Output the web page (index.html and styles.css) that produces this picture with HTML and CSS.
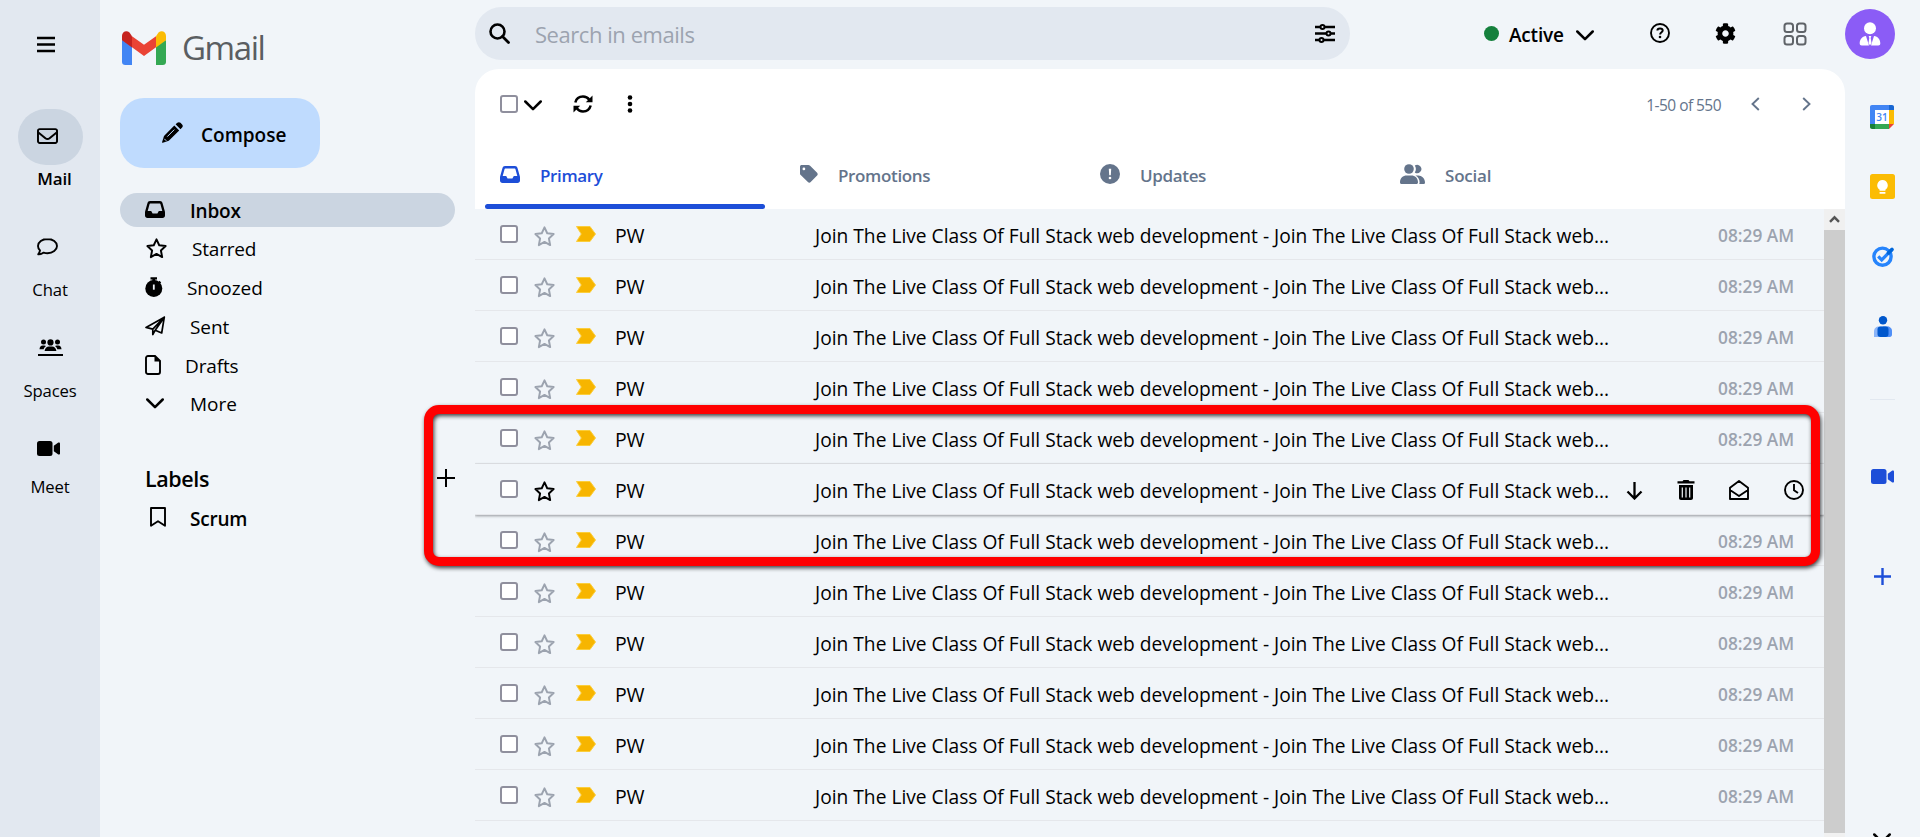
FILE: index.html
```html
<!DOCTYPE html>
<html lang="en">
<head>
<meta charset="utf-8">
<title>Gmail</title>
<link rel="stylesheet" href="styles.css">
</head>
<body>
<svg class="defs" aria-hidden="true">
  <symbol id="envelope" viewBox="0 64 512 384"><path d="M64 112c-8.800 0-16 7.200-16 16v22.100L220.500 291.700c20.700 17 50.400 17 71.100 0L464 150.100V128c0-8.800-7.200-16-16-16H64zM48 212.200V384c0 8.800 7.200 16 16 16H448c8.800 0 16-7.200 16-16V212.200L322 328.800c-38.400 31.500-93.700 31.500-132 0L48 212.200zM0 128C0 92.700 28.700 64 64 64H448c35.300 0 64 28.700 64 64V384c0 35.300-28.700 64-64 64H64c-35.300 0-64-28.700-64-64V128z"/></symbol>
  <symbol id="star" viewBox="0 0 20 20"><path d="M10 1.300l2.600 5.600 6.100.8-4.500 4.200 1.200 6.300L10 15.200l-5.400 3 1.200-6.300L1.300 7.700l6.100-.8z" fill="none" stroke="currentColor" stroke-width="1.850" stroke-linejoin="round"/></symbol>
  <symbol id="chevron" viewBox="0 0 18 11"><path d="M1.300 1.500L9 9.200l7.700-7.700" fill="none" stroke="currentColor" stroke-width="2.500" stroke-linecap="round" stroke-linejoin="round"/></symbol>
  <symbol id="inbox" viewBox="0 0 20 17"><path fill-rule="evenodd" d="M5 0h10c1.300 0 2.200.8 2.500 2l2.400 8.500c.1.400.1.800.1 1.200V14.500c0 1.500-1 2.500-2.500 2.500h-15C1 17 0 16 0 14.500V11.700c0-.4 0-.8.1-1.200L2.500 2C2.800.8 3.700 0 5 0zm.2 2.400c-.3 0-.5.200-.6.500L2.700 10h3.500l1.400 2.500h4.800l1.400-2.500h3.500l-1.900-7.100c-.1-.3-.3-.5-.6-.5z"/></symbol>
  <symbol id="video" viewBox="0 0 23 15"><rect width="15.500" height="15" rx="2.500"/><path d="M16.800 4.800l4.500-3.200c.8-.5 1.700 0 1.700.9v10c0 .9-.9 1.400-1.700.9l-4.500-3.200z"/></symbol>
  <symbol id="plus" viewBox="0 0 18 18"><path d="M9 0v18M0 9h18" stroke="currentColor" stroke-width="2"/></symbol>
  <symbol id="important" viewBox="0 0 20 16"><path d="M.5.500h13.500L19.500 8 14 15.500H.5L5.300 8z" fill="#f7b500" stroke="#fbce3c"/></symbol>
</svg>

<div class="app">
  <nav class="rail">
    <svg class="menu" viewBox="0 0 18 15"><path d="M0 1h18M0 7.500h18M0 14h18" stroke="currentColor" stroke-width="2.500"/></svg>
    <div class="mail-pill"><svg width="21" height="16"><use href="#envelope"/></svg></div>
    <div class="rail-label mail">Mail</div>
    <svg class="r-chat" viewBox="0 0 21 18"><path d="M10.500 1C5.200 1 1 4 1 8c0 1.700.8 3.200 2 4.400-.2 1.600-1 2.900-1.800 3.900 2.200.1 4.200-.7 5.500-1.700 1.200.4 2.500.6 3.800.6 5.300 0 9.500-3.200 9.500-7.200S15.800 1 10.500 1z" fill="none" stroke="currentColor" stroke-width="1.900" stroke-linejoin="round"/></svg>
    <div class="rail-label chat">Chat</div>
    <svg class="r-spaces" viewBox="0 0 25 18"><circle cx="5.500" cy="2.900" r="2.500"/><circle cx="19.500" cy="2.900" r="2.500"/><circle cx="12.500" cy="3.400" r="3.100"/><path d="M6.600 12c.2-2.700 2.100-4.500 4.400-4.500h3c2.300 0 4.200 1.800 4.400 4.500zM1.500 10.200C1.500 8 2.900 6.400 4.700 6.400h1.500c.7 0 1.300.2 1.800.6-1.200.8-2 1.900-2.300 3.200zM23.500 10.200c0-2.200-1.400-3.800-3.200-3.800h-1.500c-.7 0-1.300.2-1.800.6 1.200.8 2 1.900 2.300 3.200z"/><path d="M0 16h25" stroke="currentColor" stroke-width="2"/></svg>
    <div class="rail-label spaces">Spaces</div>
    <svg class="r-meet"><use href="#video"/></svg>
    <div class="rail-label meet">Meet</div>
  </nav>

  <aside class="sidebar">
    <div class="logo">
      <svg width="44" height="34" viewBox="0 0 44 34"><path d="M0 9v22c0 1.800 1.300 3 3.200 3H10V14z" fill="#4285f4"/><path d="M44 9v22c0 1.800-1.300 3-3.200 3H34V14z" fill="#34a853"/><path d="M10 5.200L22 13.700l12-8.500v11L22 25 10 16.200z" fill="#ea4335"/><path d="M0 4.800v4.400l10 7.300V5.200L7.500 1.400C4.500-1.200 0 .5 0 4.800z" fill="#c5221f"/><path d="M44 4.800v4.400l-10 7.300V5.200l2.500-3.800C39.500-1.200 44 .5 44 4.800z" fill="#fbbc04"/></svg>
      <span class="wordmark">Gmail</span>
    </div>
    <button class="compose">
      <svg width="21" height="21" viewBox="0 0 21 21"><path d="M12.300 3.600l4.900 4.900L6.800 18.800.8 20.800c-.5.100-.8-.2-.7-.7L2 13.900zM13.600 2.300L15.300.8c.9-.9 2.300-.9 3.200 0l1.600 1.700c.9.900.9 2.200 0 3.100l-1.600 1.700z"/><path d="M5.300 14.600l7-7M2.300 16.800l2 2" stroke="#bfdbfe" stroke-width="1"/></svg>
      <span>Compose</span>
    </button>
    <ul class="folders">
      <li class="active"><svg width="20" height="17"><use href="#inbox"/></svg><span>Inbox</span></li>
      <li class="starred"><svg width="21" height="21"><use href="#star"/></svg><span>Starred</span></li>
      <li class="snoozed"><svg width="18" height="20" viewBox="0 0 18 20"><circle cx="8.800" cy="11.500" r="8.500"/><path d="M5.500.2h6.500v2.200h-1.800v2H7.400v-2H5.500zM14.500 3.800l1.700 1.700-2 2-1.700-1.700z"/><path d="M8.800 7.500v5.200" stroke="#f1f5f9" stroke-width="1.800"/></svg><span>Snoozed</span></li>
      <li class="sent"><svg width="21" height="20" viewBox="0 0 21 20"><path d="M1 11.400L19.300 1.200 16.700 17l-6.500-2.800-2.400 4.300v-5.400zM7.800 13.100L19.300 1.200l-9.100 13" fill="none" stroke="currentColor" stroke-width="1.700" stroke-linejoin="round"/></svg><span>Sent</span></li>
      <li class="drafts"><svg width="16" height="20" viewBox="0 0 16 20"><path d="M3 1h7l5 5v11a2 2 0 0 1-2 2H3a2 2 0 0 1-2-2V3a2 2 0 0 1 2-2z" fill="none" stroke="currentColor" stroke-width="1.900"/><path d="M9.500 1v5.500H15z"/></svg><span>Drafts</span></li>
      <li class="more"><svg width="18" height="11"><use href="#chevron"/></svg><span>More</span></li>
    </ul>
    <div class="labels"><h2>Labels</h2><svg width="18" height="18"><use href="#plus"/></svg></div>
    <div class="label"><svg width="16" height="20" viewBox="0 0 16 20"><path d="M1 1h14v17.800l-7-4.600-7 4.600z" fill="none" stroke="currentColor" stroke-width="1.900" stroke-linejoin="round"/></svg><span>Scrum</span></div>
  </aside>

  <main class="main">
    <header class="topbar">
      <div class="search">
        <svg width="21" height="21" viewBox="0 0 21 21"><circle cx="8.500" cy="8.500" r="7" fill="none" stroke="currentColor" stroke-width="2.600"/><path d="M13.500 13.500l6 6" stroke="currentColor" stroke-width="2.800" stroke-linecap="round"/></svg>
        <span class="placeholder">Search in emails</span>
        <svg class="sliders" width="20" height="19" viewBox="0 0 20 19"><path d="M0 3h20M0 9.500h20M0 16h20" stroke="currentColor" stroke-width="2.500"/><g fill="#e2e8f0" stroke="currentColor" stroke-width="2"><circle cx="7.500" cy="3" r="2"/><circle cx="13.500" cy="9.500" r="2"/><circle cx="6.500" cy="16" r="2"/></g></svg>
      </div>
      <div class="status"><i class="dot"></i><span>Active</span><svg width="18" height="11"><use href="#chevron"/></svg></div>
      <svg class="help" width="20" height="20" viewBox="0 0 20 20"><circle cx="10" cy="10" r="9" fill="none" stroke="currentColor" stroke-width="1.900"/><path d="M7.400 7.600c0-1.300 1-2.100 2.600-2.100s2.700.8 2.700 2.100c0 1.700-2.600 1.800-2.600 3.900" fill="none" stroke="currentColor" stroke-width="2"/><circle cx="10" cy="14" r="1.300"/></svg>
      <svg class="gear" width="21" height="21" viewBox="0 0 512 512"><path d="M487.400 315.700l-42.600-24.600c4.300-23.200 4.300-47 0-70.200l42.600-24.600c4.900-2.800 7.100-8.600 5.500-14-11.100-35.600-30-67.800-54.700-94.600-3.800-4.100-10-5.100-14.800-2.300L380.800 110c-17.900-15.400-38.500-27.300-60.800-35.100V25.800c0-5.600-3.900-10.500-9.400-11.700-36.700-8.200-74.300-7.800-109.200 0-5.500 1.200-9.400 6.100-9.400 11.700V75c-22.200 7.900-42.800 19.800-60.800 35.100L88.700 85.500c-4.900-2.800-11-1.900-14.800 2.300-24.700 26.700-43.600 58.900-54.700 94.600-1.700 5.400.6 11.200 5.500 14L67.300 221c-4.300 23.200-4.300 47 0 70.200l-42.600 24.600c-4.900 2.800-7.100 8.600-5.500 14 11.100 35.600 30 67.800 54.700 94.600 3.800 4.100 10 5.100 14.800 2.300l42.600-24.600c17.900 15.400 38.500 27.300 60.800 35.100v49.200c0 5.600 3.900 10.500 9.400 11.700 36.700 8.200 74.300 7.800 109.200 0 5.500-1.200 9.400-6.100 9.400-11.700v-49.200c22.200-7.900 42.800-19.800 60.800-35.100l42.600 24.600c4.900 2.800 11 1.900 14.800-2.300 24.700-26.700 43.600-58.900 54.700-94.600 1.500-5.500-.7-11.300-5.600-14.100zM256 336c-44.100 0-80-35.900-80-80s35.900-80 80-80 80 35.900 80 80-35.900 80-80 80z"/></svg>
      <svg class="grid" width="24" height="24" viewBox="0 0 24 24"><g fill="none" stroke="#5f6368" stroke-width="2"><rect x="1.500" y="1.500" width="8.500" height="8.500" rx="2.500"/><rect x="14" y="1.500" width="8.500" height="8.500" rx="2.500"/><rect x="1.500" y="14" width="8.500" height="8.500" rx="2.500"/><rect x="14" y="14" width="8.500" height="8.500" rx="2.500"/></g></svg>
      <div class="avatar"><svg width="22" height="24" viewBox="0 0 22 24"><circle cx="11" cy="6.300" r="6"/><path d="M7 14l3 9.500h2L15 14c4 .5 6.300 3.500 6.300 7.500 0 1.200-.7 2-2 2H2.700c-1.300 0-2-.8-2-2C.7 17.500 3 14.500 7 14zM9.700 14h2.600l-.6 2 .8 5-1.500 2.500L9.500 21l.8-5z"/></svg></div>
    </header>

    <section class="card">
      <div class="toolbar">
        <i class="check"></i>
        <svg class="t-chev" width="18" height="11"><use href="#chevron"/></svg>
        <svg class="refresh" width="20" height="18" viewBox="0 0 20 18"><g fill="none" stroke="currentColor" stroke-width="2.500"><path d="M2.300 7.500C3.200 4.100 6.200 1.600 10 1.600c2.700 0 4.900 1.200 6.300 3.100M17.700 10.500c-.9 3.400-3.900 5.900-7.700 5.900-2.700 0-4.900-1.200-6.300-3.100"/></g><path d="M19.500.5v6.700h-6.700zM.5 17.500v-6.700h6.700z"/></svg>
        <svg class="dots" width="6" height="18" viewBox="0 0 6 18"><circle cx="3" cy="2.500" r="2.300"/><circle cx="3" cy="9" r="2.300"/><circle cx="3" cy="15.500" r="2.300"/></svg>
        <span class="count">1-50 of 550</span>
        <svg class="prev" width="9" height="14" viewBox="0 0 9 14"><path d="M7.800 1L1.500 7l6.300 6" fill="none" stroke="currentColor" stroke-width="1.900"/></svg>
        <svg class="next" width="9" height="14" viewBox="0 0 9 14"><path d="M1.200 1l6.300 6-6.300 6" fill="none" stroke="currentColor" stroke-width="1.900"/></svg>
      </div>
      <div class="tabs">
        <div class="tab active"><svg width="20" height="17"><use href="#inbox"/></svg><span>Primary</span></div>
        <div class="tab promo"><svg width="18" height="18" viewBox="0 0 18 18"><path fill-rule="evenodd" d="M0 1.700C0 .7.700 0 1.700 0h6.700c.6 0 1.200.2 1.700.7l7 7c.8.800.8 2 0 2.800l-6.400 6.600c-.8.800-2 .8-2.800 0l-7.200-7C.2 9.600 0 9 0 8.400zM3.900 2.500a1.400 1.400 0 1 0 0 2.800 1.400 1.400 0 0 0 0-2.800z"/></svg><span>Promotions</span></div>
        <div class="tab upd"><svg width="20" height="20" viewBox="0 0 20 20"><circle cx="10" cy="10" r="10"/><path d="M8.800 4.700h2.400l-.4 6.500H9.200z" fill="#fff"/><circle cx="10" cy="14" r="1.300" fill="#fff"/></svg><span>Updates</span></div>
        <div class="tab soc"><svg width="25" height="20" viewBox="0 0 25 20"><circle cx="9" cy="5" r="4.800"/><path d="M0 18.200C0 14 3 11.500 6.700 11.500h4.600c3.700 0 6.700 2.500 6.700 6.700 0 1-.6 1.800-1.600 1.800H1.600C.6 20 0 19.200 0 18.200zM14.800 8.500a6.600 6.600 0 0 0 0-7A4.200 4.200 0 1 1 14.800 8.500zM15.500 11.500h2.700c3.700 0 6.800 2.900 6.800 6.900 0 1-.6 1.600-1.600 1.600h-4.200c.3-.5.400-1 .4-1.700 0-2.800-1.400-5.200-4.100-6.800z"/></svg><span>Social</span></div>
      </div>
    </section>

    <div class="list">
      <div class="rows" id="rows"></div>
      <div class="scrollbar"><div class="up"><svg width="11" height="8" viewBox="0 0 11 8"><path d="M1 6.800l4.500-4.500L10 6.800" fill="none" stroke="#555" stroke-width="2.400"/></svg></div><div class="thumb"></div></div>
    </div>
  </main>

  <aside class="addons">
    <svg class="cal" width="24" height="24" viewBox="0 0 24 24"><rect x="5" y="5" width="14" height="14" fill="#fff"/><path d="M2 0h17v5H5v14H0V2c0-1.200.8-2 2-2z" fill="#4285f4"/><path d="M19 0h3c1.200 0 2 .8 2 2v3h-5z" fill="#1967d2"/><path d="M19 5h5v14h-5z" fill="#fbbc04"/><path d="M5 19h14v5H5z" fill="#34a853"/><path d="M0 19h5v5H2c-1.200 0-2-.8-2-2z" fill="#188038"/><path d="M19 19h5l-5 5z" fill="#ea4335"/><text x="12" y="15.800" class="cal-day">31</text></svg>
    <svg class="keep" width="25" height="25" viewBox="0 0 25 25"><rect width="25" height="25" rx="2.500" fill="#fbbc04"/><path d="M12.500 6a5.300 5.300 0 0 0-2.900 9.700v1h5.800v-1A5.300 5.300 0 0 0 12.500 6zM9.600 18h5.800v1.800H9.600z" fill="#fff"/></svg>
    <svg class="tasks" width="22" height="21" viewBox="0 0 22 21"><circle cx="10.500" cy="10.700" r="8.600" fill="none" stroke="#2684fc" stroke-width="3.400"/><path d="M6.200 10.400l3.500 3.500L20 3.500" fill="none" stroke="#2684fc" stroke-width="3.200"/><path d="M16.500 6.900L20 3.500" stroke="#0066da" stroke-width="3.600" stroke-linecap="round"/></svg>
    <svg class="contacts" width="18" height="21" viewBox="0 0 18 21"><circle cx="9" cy="4.200" r="4.200" fill="#0057cc"/><path d="M5 10.500h8c3 0 5 2 5 5V18c0 2-1 3-3 3H0v-5.500c0-3 2-5 5-5z" fill="#8ab4f8"/><path d="M9 10.500h4c3 0 5 2 5 5V18c0 2-1 3-3 3H9z" fill="#4f8ff7"/><rect x="3.500" y="10.500" width="11" height="10.500" rx="3" fill="#0057cc"/></svg>
    <i class="rule"></i>
    <svg class="a-video" width="23" height="15"><use href="#video"/></svg>
    <svg class="a-plus" width="17" height="17" viewBox="0 0 17 17"><path d="M8.500 0v17M0 8.500h17" stroke="currentColor" stroke-width="2.400"/></svg>
    <svg class="a-chev" width="18" height="11"><use href="#chevron"/></svg>
  </aside>
</div>
<div class="highlight"></div>
<script src="rows.js"></script>
</body>
</html>
```
FILE: styles.css
```css
* { box-sizing: border-box; }
body { margin: 0; background: #f1f5f9; color: #000; font-family: "Open Sans", "Noto Sans", sans-serif; font-size: 19px; overflow: hidden; height: 837px; }
svg { display: block; flex: none; fill: currentColor; }
span { white-space: nowrap; }
.defs { position: absolute; width: 0; height: 0; }
.app { display: grid; grid-template-columns: 100px 375px 1370px 75px; height: 837px; overflow: hidden; }

.rail { background: #e2e8f0; }
.menu { width: 18px; height: 15px; margin: 37px 0 57px 37px; overflow: visible; }
.mail-pill { width: 65px; height: 56px; margin-left: 18px; padding: 19px 0 0 19px; border-radius: 28px; background: #cbd5e1; }
.rail-label { font-size: 16.700px; line-height: 24px; text-align: center; letter-spacing: -.15px; }
.mail { margin: 2px 0 0 9px; font-weight: 600; font-size: 17px; }
.r-chat { width: 21px; height: 18px; margin: 47px 0 22px 37px; }
.r-spaces { width: 25px; height: 18px; margin: 37px 0 22px 38px; }
.r-meet { width: 23px; height: 15px; margin: 38px 0 19px 37px; }

.sidebar { padding: 31px 20px 0; }
.logo { display: flex; height: 67px; padding-left: 2px; }
.wordmark { margin: -8px 0 0 16px; font: 500 33px/50px "Open Sans", sans-serif; letter-spacing: -1.400px; color: #5a5e62; }
.compose { display: flex; align-items: center; width: 200px; height: 70px; padding: 0 0 0 42px; border: 0; border-radius: 24px; background: #bfdbfe; color: #000; font: 600 19px/28px "Open Sans", sans-serif; }
.compose svg { margin-top: -1px; }
.compose span { margin: 4px 0 0 18px; letter-spacing: 0; }
.folders { margin: 25px 0 0; padding: 0; list-style: none; }
.folders li { display: flex; align-items: center; height: 34px; margin-bottom: 5px; padding-left: 25px; border-radius: 17px; }
.folders svg { margin-top: -2px; }
.folders span { margin: 0 0 0 25px; letter-spacing: -.05px; }
.folders .active { background: #cbd5e1; font-weight: 600; }
.folders .active span { margin-top: 2px; letter-spacing: -.2px; }
.folders .starred svg { margin-left: 1px; }
.folders .starred span { margin-left: 25px; letter-spacing: -.2px; }
.folders .snoozed span { margin-left: 24px; }
.folders .sent span { margin-left: 24px; }
.folders .drafts { height: 33px; }
.folders .drafts span { margin-left: 24px; letter-spacing: -.15px; }
.folders .more svg { margin-left: 1px; }
.folders .more span { margin-left: 26px; }
.labels { display: flex; align-items: center; justify-content: space-between; height: 30px; margin-top: 42px; padding-left: 25px; }
.labels h2 { margin: 0; font-size: 21.500px; font-weight: 600; letter-spacing: -.4px; }
.label { display: flex; align-items: center; height: 30px; margin-top: 9px; padding-left: 30px; font-weight: 600; }
.label span { margin: 3px 0 0 24px; letter-spacing: -.2px; }

.main { display: flex; flex-direction: column; min-width: 0; }
.topbar { display: flex; align-items: flex-start; height: 69px; flex: none; }
.search { display: flex; align-items: center; width: 875px; height: 53px; margin-top: 7px; padding: 0 15px; border-radius: 27px; background: #e2e8f0; }
.search svg { margin-top: -1px; margin-left: -1px; }
.placeholder { margin: 1px 0 0 25px; font-size: 22px; letter-spacing: -.45px; color: #9ca3af; }
.search .sliders { margin-left: auto; }
.status { display: flex; align-items: center; height: 70px; width: 110px; margin-left: 134px; font-weight: 600; }
.status span { margin: 0 11px 0 10px; letter-spacing: -.2px; }
.status svg { margin-left: 1px; }
.dot { width: 15px; height: 15px; border-radius: 50%; background: #15803d; margin-top: -3px; }
.help { margin: 23px 0 0 56px; }
.gear { margin: 23px 0 0 45px; }
.grid { margin: 22px 0 0 47px; }
.avatar { display: flex; align-items: center; justify-content: center; width: 50px; height: 50px; margin: 9px -51px 0 38px; border-radius: 50%; background: #8b5cf6; color: #fff; flex: none; }

.card { flex: none; height: 140px; background: #fff; border-radius: 24px 24px 0 0; }
.toolbar { display: flex; align-items: center; height: 70px; padding: 0 34px 0 25px; }
.check { flex: none; width: 18px; height: 18px; border: 2px solid #8f8f9d; border-radius: 3px; background: #fff; }
.t-chev { margin: 3px 0 0 6px; }
.refresh { margin-left: 31px; }
.dots { margin-left: 34px; }
.count { margin: 1px 0 0 auto; font-size: 15.500px; color: #64748b; letter-spacing: -.55px; }
.prev { margin-left: 30px; color: #64748b; }
.next { margin-left: 42px; color: #64748b; }
.tabs { display: grid; grid-template-columns: 300px 300px 300px 300px; height: 70px; padding-left: 10px; font-size: 17px; font-weight: 600; color: #64748b; }
.tab { display: flex; align-items: center; height: 70px; padding-left: 15px; padding-bottom: 1px; }
.tab span { margin: 4px 0 0 20px; letter-spacing: -.35px; }
.tab.active { position: relative; padding: 0 0 0 15px; color: #1d4ed8; }
.tab.active span { margin-top: 3px; }
.tab.active::after { content: ""; position: absolute; left: 0; bottom: 0; width: 280px; height: 5px; border-radius: 3px; background: #1d4ed8; }
.tab.soc span { letter-spacing: -.2px; }

.list { display: flex; flex: 1; min-height: 0; }
.rows { width: 1349px; }
.row { display: flex; height: 51px; padding-left: 25px; border-bottom: 1px solid #e5e7eb; }
.row .check { margin-top: 16px; }
.row .star { margin: 17px 0 0 16px; color: #9ca3af; }
.row .imp { margin: 17px 0 0 21px; }
.row span { line-height: 30px; margin-top: 12px; }
.from { width: 200px; margin-left: 19px; font-size: 19.500px; letter-spacing: -.2px; }
.subject { width: 804px; font-size: 19.200px; }
.row .time { margin-left: 99px; font-size: 17.300px; font-weight: 600; color: #9ca3af; letter-spacing: 0; }
.row.hover { position: relative; box-shadow: 0 1px 3px rgba(60,64,67,.3), 0 1px 2px rgba(60,64,67,.25); clip-path: inset(-2px 0 -4px 0); }
.row.hover .star { color: #000; }
.row .down { margin: 18px 0 0 7px; }
.row .trash { margin: 16px 0 0 34px; }
.row .open { margin: 16px 0 0 34px; }
.row .clock { margin: 16px 0 0 35px; }
.scrollbar { width: 21px; background: #f1f1f1; }
.up { display: flex; align-items: center; justify-content: center; height: 21px; padding-bottom: 2px; background: #f0f0f0; }
.thumb { height: 603px; background: #cdcdcd; }

.addons { display: flex; flex-direction: column; align-items: flex-start; padding: 105px 0 0 25px; }
.cal-day { font: 600 10px "Open Sans", sans-serif; text-anchor: middle; fill: #4285f4; }
.cal { margin-bottom: 45px; }
.keep { margin-bottom: 47px; }
.tasks { margin: 0 0 49px 2px; }
.contacts { margin-left: 4px; }
.rule { width: 25px; height: 1px; margin: 62px 0 69px; background: #e2e8f0; }
.a-video, .a-plus { color: #1d4ed8; }
.a-video { margin-left: 1px; }
.a-plus { margin: 84px 0 248px 4px; }
.a-chev { margin-left: 3px; }

.highlight { position: absolute; left: 424px; top: 405px; width: 1396px; height: 161px; border: 9px solid #f00; border-radius: 15px; filter: drop-shadow(1px 2px 2px rgba(0,0,0,.75)); pointer-events: none; }
```
FILE: rows.js
```js
const time = '<span class="time">08:29 AM</span>';
const actions = `
  <svg class="down" width="17" height="18" viewBox="0 0 17 18"><path d="M8.500 0v16M1.500 9.500l7 7 7-7" fill="none" stroke="currentColor" stroke-width="2.300"/></svg>
  <svg class="trash" width="18" height="20" viewBox="0 0 18 20"><path d="M5.500 1.200L6.500 0h5l1 1.200h5V3.500H.5V1.200z"/><path fill-rule="evenodd" d="M2 5h14v13c0 1.200-.8 2-2 2H4c-1.200 0-2-.8-2-2zm2.700 2.500v10h1.200v-10zm3.700 0v10h1.200v-10zm3.700 0v10h1.200v-10z"/></svg>
  <svg class="open" width="20" height="21" viewBox="0 0 20 21"><path d="M1 7.800L10 1l9 6.800V19H1zM1 10l9 6 9-6" fill="none" stroke="currentColor" stroke-width="1.900" stroke-linejoin="round"/></svg>
  <svg class="clock" width="20" height="20" viewBox="0 0 20 20"><path d="M10 4v6.200l4 2.800" fill="none" stroke="currentColor" stroke-width="1.900"/><circle cx="10" cy="10" r="9" fill="none" stroke="currentColor" stroke-width="1.900"/></svg>`;

document.getElementById('rows').innerHTML = Array.from({ length: 12 }, (_, i) => `
  <div class="row${i === 5 ? ' hover' : ''}">
    <i class="check"></i>
    <svg class="star" width="21" height="21"><use href="#star"/></svg>
    <svg class="imp" width="20" height="16"><use href="#important"/></svg>
    <span class="from">PW</span>
    <span class="subject">Join The Live Class Of Full Stack web development - Join The Live Class Of Full Stack web...</span>
    ${i === 5 ? actions : time}
  </div>`).join('');
```
